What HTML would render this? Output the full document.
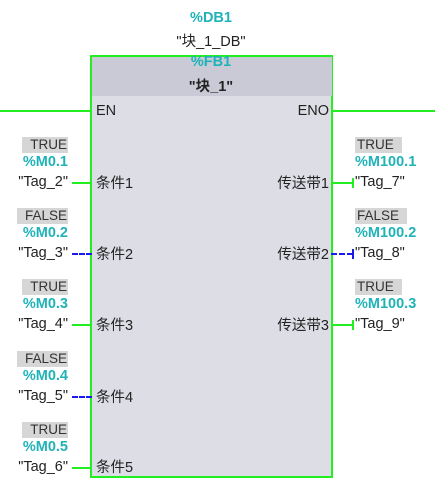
<!DOCTYPE html><html><head><style>
body{margin:0;width:435px;height:490px;background:#fff;position:relative;overflow:hidden;font-family:"Liberation Sans","Noto Sans CJK SC",sans-serif;font-size:14.5px;color:#222}
div{position:absolute;white-space:nowrap}
.blk{left:90px;top:55px;width:239px;height:419px;border:2.5px solid #22ee22;background:#dddde6}
.hdr{left:92px;top:57px;width:240px;height:39px;background:#c9cad5}
.c{color:#1fb3b8;font-weight:bold}
.box{background:#d6d6d6;height:16px;line-height:16px;padding:0 1px 0 8px;color:#333;font-size:13.5px}
.rb{padding:0 8px 0 2px}
.l{right:367px;text-align:right}
.wire{height:2px;background:#22ee22}
.dash{height:0;border-top:2px dashed #1a1aee}
.pin{line-height:16px}
</style></head><body>
<div style="left:0;top:110px;width:92px" class="wire"></div>
<div style="left:331px;top:110px;width:104px" class="wire"></div>
<div class="blk"></div><div class="hdr"></div>
<div class="c" style="left:0;width:422px;text-align:center;top:10px">%DB1</div>
<div style="left:0;width:422px;text-align:center;top:30px">"块_1_DB"</div>
<div class="c" style="left:0;width:422px;text-align:center;top:54px">%FB1</div>
<div style="left:0;width:422px;text-align:center;top:75px;font-weight:bold">"块_1"</div>
<div class="pin" style="left:96px;top:103px">EN</div>
<div class="pin" style="right:106px;top:103px">ENO</div>

<div class="box l" style="top:137px">TRUE</div><div class="c l" style="top:154px">%M0.1</div><div class="l" style="top:174px">"Tag_2"</div>
<div class="wire" style="left:72px;top:182px;width:20px"></div><div class="pin" style="left:96px;top:176px">条件1</div>

<div class="box l" style="top:208px">FALSE</div><div class="c l" style="top:225px">%M0.2</div><div class="l" style="top:245px">"Tag_3"</div>
<div class="dash" style="left:72px;top:253px;width:20px"></div><div class="pin" style="left:96px;top:247px">条件2</div>

<div class="box l" style="top:279px">TRUE</div><div class="c l" style="top:296px">%M0.3</div><div class="l" style="top:316px">"Tag_4"</div>
<div class="wire" style="left:72px;top:324px;width:20px"></div><div class="pin" style="left:96px;top:318px">条件3</div>

<div class="box l" style="top:351px">FALSE</div><div class="c l" style="top:368px">%M0.4</div><div class="l" style="top:388px">"Tag_5"</div>
<div class="dash" style="left:72px;top:396px;width:20px"></div><div class="pin" style="left:96px;top:390px">条件4</div>

<div class="box l" style="top:422px">TRUE</div><div class="c l" style="top:439px">%M0.5</div><div class="l" style="top:459px">"Tag_6"</div>
<div class="wire" style="left:72px;top:467px;width:20px"></div><div class="pin" style="left:96px;top:460px">条件5</div>

<div class="box rb" style="left:355px;top:137px">TRUE</div><div class="c" style="left:355px;top:154px">%M100.1</div><div style="left:355px;top:174px">"Tag_7"</div>
<div class="wire" style="left:331px;top:182px;width:22px"></div><div style="left:352px;top:178px;width:2px;height:10px;background:#22ee22"></div>
<div class="pin" style="right:106px;top:176px">传送带1</div>

<div class="box rb" style="left:355px;top:208px">FALSE</div><div class="c" style="left:355px;top:225px">%M100.2</div><div style="left:355px;top:245px">"Tag_8"</div>
<div class="dash" style="left:331px;top:253px;width:22px"></div><div style="left:352px;top:249px;width:2px;height:10px;background:#1a1aee"></div>
<div class="pin" style="right:106px;top:247px">传送带2</div>

<div class="box rb" style="left:355px;top:279px">TRUE</div><div class="c" style="left:355px;top:296px">%M100.3</div><div style="left:355px;top:316px">"Tag_9"</div>
<div class="wire" style="left:331px;top:324px;width:22px"></div><div style="left:352px;top:320px;width:2px;height:10px;background:#22ee22"></div>
<div class="pin" style="right:106px;top:318px">传送带3</div>
</body></html>
